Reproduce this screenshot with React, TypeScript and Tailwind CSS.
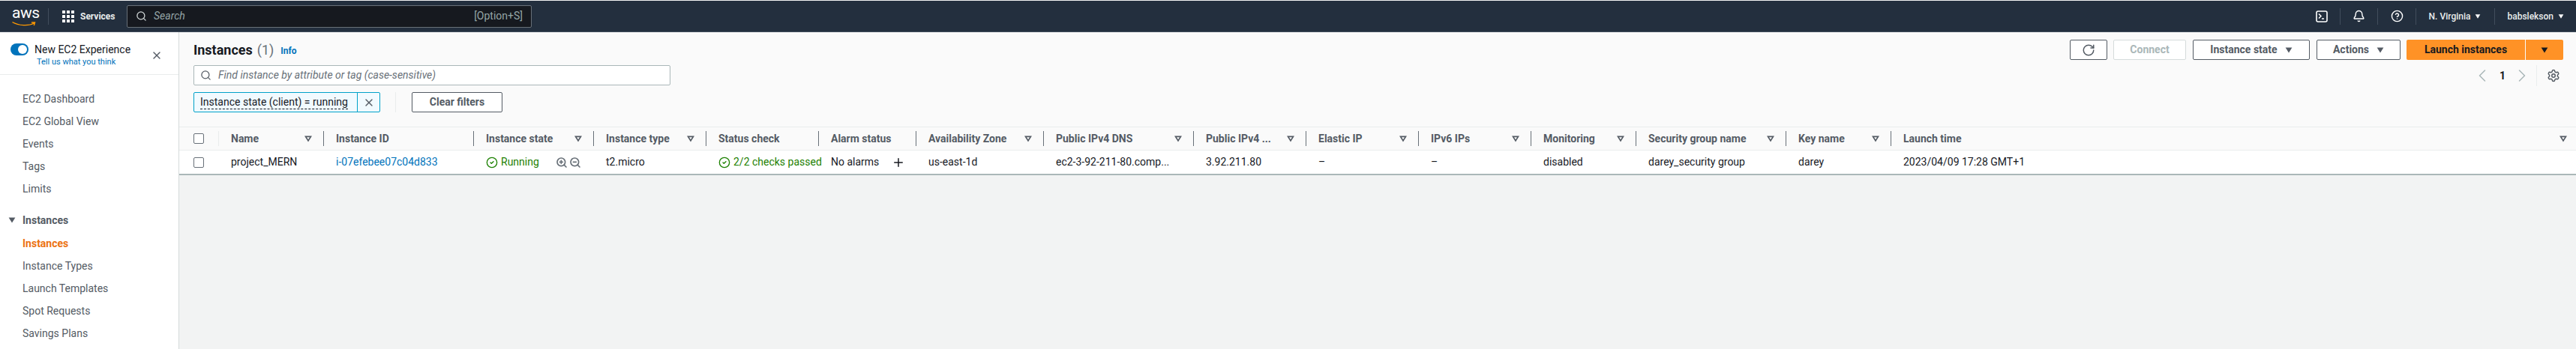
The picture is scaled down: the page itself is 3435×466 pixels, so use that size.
import { Bell, ChevronLeft, ChevronRight, CircleCheck, CircleHelp, Plus, RotateCw, Search, Settings, X, ZoomIn, ZoomOut } from 'lucide-react';
import { ReactElement, ReactNode } from 'react';

function Caret({ className }: { className: string }): ReactElement {
  return (
    <svg viewBox="0 0 12 10" className={className} fill="currentColor">
      <path d="M0.5 0.5h11L6 9.5z" />
    </svg>
  );
}

function FilterIcon(): ReactElement {
  return (
    <svg viewBox="0 0 12 10" className="w-[10px] h-[9px] shrink-0 text-[#545b64]" fill="none" stroke="currentColor" strokeWidth="2">
      <path d="M1.8 1.2h8.4L6 8z" />
    </svg>
  );
}

function Checkbox(): ReactElement {
  return <div className="w-[14px] h-[14px] bg-white rounded-[2px] border border-[#687078]" />;
}

function NavDivider(): ReactElement {
  return <div className="w-px h-[22px] bg-[#414d5c]" />;
}

type Col = { width: string; title: string; filter: boolean; cell: ReactNode };

const columns: Col[] = [
  { width: 'w-[140px]', title: 'Name', filter: true, cell: 'project_MERN' },
  { width: 'w-[200px]', title: 'Instance ID', filter: false, cell: <span className="text-[#0073bb]">i-07efebee07c04d833</span> },
  {
    width: 'w-[160px]',
    title: 'Instance state',
    filter: true,
    cell: (
      <div className="flex items-center text-[#1d8102]">
        <CircleCheck className="w-[16px] h-[16px] mr-[4px]" strokeWidth={2} />
        <span>Running</span>
        <ZoomIn className="w-[16px] h-[16px] ml-[22px] text-[#687078]" strokeWidth={2.5} />
        <ZoomOut className="w-[16px] h-[16px] ml-[2px] text-[#687078]" strokeWidth={2.5} />
      </div>
    ),
  },
  { width: 'w-[150px]', title: 'Instance type', filter: true, cell: 't2.micro' },
  {
    width: 'w-[150px]',
    title: 'Status check',
    filter: false,
    cell: (
      <div className="flex items-center text-[#1d8102] whitespace-nowrap">
        <CircleCheck className="w-[16px] h-[16px] mr-[4px] shrink-0" strokeWidth={2} />
        <span>2/2 checks passed</span>
      </div>
    ),
  },
  {
    width: 'w-[130px]',
    title: 'Alarm status',
    filter: false,
    cell: (
      <div className="flex items-center">
        <span>No alarms</span>
        <Plus className="w-[18px] h-[18px] ml-[17px] text-[#16191f]" strokeWidth={2} />
      </div>
    ),
  },
  { width: 'w-[170px]', title: 'Availability Zone', filter: true, cell: 'us-east-1d' },
  { width: 'w-[200px]', title: 'Public IPv4 DNS', filter: true, cell: 'ec2-3-92-211-80.comp...' },
  { width: 'w-[150px]', title: 'Public IPv4 ...', filter: true, cell: '3.92.211.80' },
  { width: 'w-[150px]', title: 'Elastic IP', filter: true, cell: '–' },
  { width: 'w-[150px]', title: 'IPv6 IPs', filter: true, cell: '–' },
  { width: 'w-[140px]', title: 'Monitoring', filter: true, cell: 'disabled' },
  { width: 'w-[200px]', title: 'Security group name', filter: true, cell: 'darey_security group' },
  { width: 'w-[140px]', title: 'Key name', filter: true, cell: 'darey' },
];

const sideTop = ['EC2 Dashboard', 'EC2 Global View', 'Events', 'Tags', 'Limits'];
const sideBottom = ['Instance Types', 'Launch Templates', 'Spot Requests', 'Savings Plans'];

function TopNav(): ReactElement {
  return (
    <header className="h-[42px] mt-px shrink-0 bg-[#232f3e] flex items-center text-white border-b border-[#414d5c]">
      <div className="w-[64px] pl-[16px] shrink-0 relative h-[30px]">
        <span className="absolute left-[16px] top-[-3px] text-[21px] leading-[26px] tracking-[-0.5px]">aws</span>
        <svg viewBox="0 0 32 8" className="absolute left-[16px] top-[21px] w-[32px] h-[8px]" fill="none">
          <path d="M0.5 1.5C9 6.5 22 7 29.5 3M26 2l4.5 0-1.2 4" stroke="#ff9900" strokeWidth="1.4" />
        </svg>
      </div>
      <NavDivider />
      <div className="grid grid-cols-3 gap-[2px] w-[16px] ml-[18px] shrink-0">
        {[0, 1, 2, 3, 4, 5, 6, 7, 8].map((i) => (
          <div key={i} className="w-[4px] h-[4px] bg-white rounded-[0.5px]" />
        ))}
      </div>
      <span className="ml-[8px] w-[62px] text-[12px] font-bold text-[#eaeded]">Services</span>
      <div className="w-[540px] h-[30px] rounded-[2px] border border-[#687078] bg-[#16191f] flex items-center px-[11px]">
        <Search className="w-[15px] h-[15px] text-[#d5dbdb]" strokeWidth={2} />
        <span className="ml-[9px] italic text-[14px] text-[#95a5a6]">Search</span>
        <span className="ml-auto text-[14px] text-[#95a5a6]">[Option+S]</span>
      </div>
      <div className="ml-auto flex items-center text-[12px] font-medium text-[#eaeded]">
        <svg viewBox="0 0 16 16" className="w-[16px] h-[16px]" fill="none" stroke="#fff">
          <rect x="1" y="1" width="14" height="14" rx="2" strokeWidth="1.6" />
          <path d="M4 4.5l3 3-3 3M8 11h3" strokeWidth="1.5" />
        </svg>
        <div className="ml-[16px] mr-[16px]"><NavDivider /></div>
        <Bell className="w-[17px] h-[17px] text-white" strokeWidth={2} />
        <div className="ml-[16px] mr-[17px]"><NavDivider /></div>
        <CircleHelp className="w-[17px] h-[17px] text-white" strokeWidth={2} />
        <div className="ml-[16px] mr-[17px]"><NavDivider /></div>
        <span>N. Virginia</span>
        <Caret className="w-[8px] h-[6px] ml-[6px] text-white" />
        <div className="ml-[18px] mr-[16px]"><NavDivider /></div>
        <span>babslekson</span>
        <Caret className="w-[8px] h-[6px] ml-[6px] mr-[16px] text-white" />
      </div>
    </header>
  );
}

function Sidebar(): ReactElement {
  return (
    <aside className="w-[239px] shrink-0 bg-white border-r border-[#d5dbdb] text-[14px] text-[#545b64]">
      <div className="h-[57px] border-b border-[#eaeded] relative">
        <div className="absolute left-[14px] top-[15px] w-[24px] h-[16px] rounded-full bg-[#0073bb] flex justify-end items-center pr-[2px]">
          <div className="w-[12px] h-[12px] rounded-full bg-white" />
        </div>
        <span className="absolute left-[46px] top-[12px] leading-[22px] text-[#16191f]">New EC2 Experience</span>
        <span className="absolute left-[49px] top-[32px] text-[11px] leading-[16px] text-[#0073bb]">Tell us what you think</span>
        <X className="absolute left-[201px] top-[23px] w-[16px] h-[16px] text-[#545b64]" strokeWidth={2} />
      </div>
      <div className="pt-[17px] pl-[30px]">
        {sideTop.map((item) => (
          <div key={item} className="h-[30px] leading-[30px]">{item}</div>
        ))}
      </div>
      <div className="mt-[12px] h-[30px] flex items-center pl-[11px] font-bold">
        <Caret className="w-[10px] h-[8px] mr-[9px] text-[#545b64]" />
        Instances
      </div>
      <div className="mt-px pl-[30px]">
        <div className="h-[30px] leading-[30px] font-bold text-[#ec7211]">Instances</div>
        {sideBottom.map((item) => (
          <div key={item} className="h-[30px] leading-[30px]">{item}</div>
        ))}
      </div>
    </aside>
  );
}

function OutlineButton({ className, children }: { className: string; children: ReactNode }): ReactElement {
  return (
    <div className={`h-[27px] rounded-[2px] border border-[#545b64] bg-white flex items-center justify-center text-[14px] font-bold text-[#545b64] ${className}`}>
      {children}
    </div>
  );
}

function Toolbar(): ReactElement {
  return (
    <div className="h-[126px] flex justify-between pt-[10px] pl-[19px] pr-[17px] bg-[#fafafa]">
      <div>
        <div className="h-[27px] flex items-center">
          <span className="text-[18px] font-bold text-[#16191f]">Instances</span>
          <span className="ml-[6px] text-[18px] text-[#687078]">(1)</span>
          <span className="ml-[9px] mt-[2px] text-[12px] font-bold text-[#0073bb]">Info</span>
        </div>
        <div className="mt-[7px] w-[636px] h-[27px] bg-white rounded-[2px] border border-[#aab7b8] flex items-center px-[8px]">
          <Search className="w-[15px] h-[15px] text-[#545b64]" strokeWidth={2} />
          <span className="ml-[9px] italic text-[14px] text-[#687078]">Find instance by attribute or tag (case-sensitive)</span>
        </div>
        <div className="mt-[9px] flex items-center">
          <div className="w-[249px] h-[27px] flex rounded-[2px] border border-[#00a1c9] bg-[#f1faff]">
            <div className="flex-1 border-r border-[#00a1c9] flex items-center pl-[8px]">
              <span className="text-[14px] leading-[17px] text-[#16191f] border-b border-dashed border-[#16191f] whitespace-nowrap">Instance state (client) = running</span>
            </div>
            <div className="w-[29px] flex items-center justify-center">
              <X className="w-[16px] h-[16px] text-[#545b64]" strokeWidth={2} />
            </div>
          </div>
          <div className="w-px h-[27px] ml-[20px] bg-[#eaeded]" />
          <OutlineButton className="w-[121px] ml-[21px]">Clear filters</OutlineButton>
        </div>
      </div>
      <div className="flex flex-col items-end">
        <div className="flex items-center">
          <OutlineButton className="w-[50px]">
            <RotateCw className="w-[18px] h-[18px]" strokeWidth={2} />
          </OutlineButton>
          <div className="w-[97px] h-[27px] ml-[8px] rounded-[2px] border border-[#d5dbdb] bg-white flex items-center justify-center text-[14px] font-bold text-[#aab7b8]">Connect</div>
          <OutlineButton className="w-[156px] ml-[9px]">
            Instance state
            <Caret className="w-[10px] h-[8px] ml-[10px]" />
          </OutlineButton>
          <OutlineButton className="w-[112px] ml-[9px]">
            Actions
            <Caret className="w-[10px] h-[8px] ml-[10px]" />
          </OutlineButton>
          <div className="w-[158px] h-[27px] ml-[8px] rounded-l-[2px] bg-[#ff9226] flex items-center justify-center text-[14px] font-bold text-[#16191f]">Launch instances</div>
          <div className="w-[50px] h-[27px] ml-px rounded-r-[2px] bg-[#ff9226] flex items-center justify-center">
            <Caret className="w-[10px] h-[8px] text-[#16191f]" />
          </div>
        </div>
        <div className="mt-[7px] h-[28px] flex items-center text-[#aab7b8]">
          <ChevronLeft className="w-[28px] h-[28px]" strokeWidth={1.3} />
          <span className="ml-[8px] w-[10px] text-center text-[14px] font-bold text-[#16191f]">1</span>
          <ChevronRight className="ml-[7px] w-[28px] h-[28px]" strokeWidth={1.3} />
          <div className="ml-[5px] w-px h-[28px] bg-[#eaeded]" />
          <Settings className="ml-[13px] mr-[4px] w-[18px] h-[18px] text-[#545b64]" strokeWidth={2} />
        </div>
      </div>
    </div>
  );
}

function InstancesTable(): ReactElement {
  return (
    <div className="text-[14px]">
      <div className="h-[32px] flex bg-[#fafafa] border-t border-b border-[#eaeded] font-bold text-[#545b64]">
        <div className="w-[53px] shrink-0 flex items-center pl-[19px] pr-0">
          <Checkbox />
          <div className="ml-auto w-px h-[20px] bg-[#eaeded]" />
        </div>
        {columns.map((col) => (
          <div key={col.title} className={`${col.width} shrink-0 flex items-center pl-[16px] whitespace-nowrap`}>
            <span className="flex-1">{col.title}</span>
            {col.filter && <FilterIcon />}
            <div className="ml-[15px] w-px h-[20px] bg-[#687078]" />
          </div>
        ))}
        <div className="flex-1 flex items-center pl-[16px] pr-[12px]">
          <span className="flex-1">Launch time</span>
          <FilterIcon />
        </div>
      </div>
      <div className="h-[33px] flex bg-white border-b-2 border-[#aab7b8] text-[#16191f]">
        <div className="w-[53px] shrink-0 flex items-center pl-[19px]">
          <Checkbox />
        </div>
        {columns.map((col) => (
          <div key={col.title} className={`${col.width} shrink-0 flex items-center pl-[16px] whitespace-nowrap`}>
            {col.cell}
          </div>
        ))}
        <div className="flex-1 flex items-center pl-[16px]">2023/04/09 17:28 GMT+1</div>
      </div>
    </div>
  );
}

export default function App(): ReactElement {
  return (
    <div className="h-[466px] overflow-hidden flex flex-col bg-[#f2f3f3] font-['Roboto',sans-serif]">
      <TopNav />
      <div className="flex flex-1 min-h-0">
        <Sidebar />
        <main className="flex-1 min-w-0">
          <Toolbar />
          <InstancesTable />
        </main>
      </div>
    </div>
  );
}
